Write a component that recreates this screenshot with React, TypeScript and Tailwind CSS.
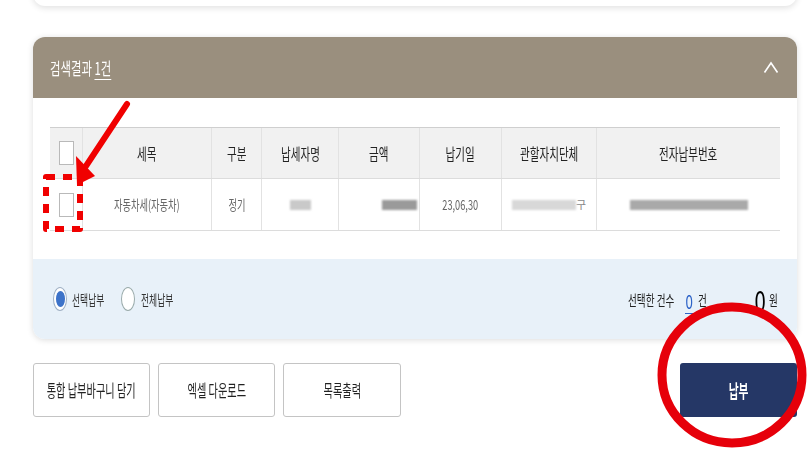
import React from "react";

const font = { fontFamily: '"Noto Sans CJK KR", "Noto Sans", sans-serif' };

function Cell({ children, className = "" }: { children?: React.ReactNode; className?: string }) {
  return (
    <div className={"flex items-center justify-center border-r border-[#e2e2e2] " + className}>{children}</div>
  );
}

function N({ children, className = "" }: { children: React.ReactNode; className?: string }) {
  return <span className={"inline-block scale-x-[0.66] whitespace-nowrap " + className}>{children}</span>;
}

function B({ children, className = "" }: { children: React.ReactNode; className?: string }) {
  return <span className={"inline-block scale-x-[0.6] whitespace-nowrap " + className}>{children}</span>;
}

function Blur({ w, c, className = "" }: { w: number; c: string; className?: string }) {
  return <span className={"inline-block h-[10px] blur-[1.2px] " + className} style={{ width: w, background: c }} />;
}

function Box() {
  return <div className="h-[24px] w-[15px] border border-[#b9b9b9] bg-white" />;
}

export default function App() {
  const cols = "grid grid-cols-[33px_129px_50px_77px_81px_82px_95px_183px]";
  return (
    <div className="relative h-[450px] w-[810px] overflow-hidden bg-white" style={font}>
      <div className="ml-[33px] mr-[13px] -mt-[20px] h-[26px] rounded-b-[12px] bg-white shadow-[0_2px_6px_rgba(0,0,0,0.12)]" />

      <div className="ml-[33px] mr-[13px] mt-[31px] rounded-[12px] bg-white shadow-[0_1px_6px_rgba(0,0,0,0.14)]">
        <div className="flex h-[61px] items-center justify-between rounded-t-[12px] bg-[#9a8f7e] pl-[17px] pr-[18px]">
          <div className="flex items-center text-[17px] text-white">
            <span className="inline-block origin-left scale-x-[0.67] whitespace-nowrap">
              검색결과 <span className="underline underline-offset-4">1건</span>
            </span>
          </div>
          <svg width="16" height="13" viewBox="0 0 16 13">
            <path d="M1.5 11.5 L8 2 L14.5 11.5" fill="none" stroke="white" strokeWidth="1.6" />
          </svg>
        </div>

        <div className="px-[17px] pt-[29px]">
          <div className="border-t border-[#cfcfcf]">
            <div className={cols + " h-[51px] border-b border-[#dcdcdc] bg-[#f1f1f1] text-[16px] text-[#222]"}>
              <Cell><Box /></Cell>
              <Cell><N>세목</N></Cell>
              <Cell><N>구분</N></Cell>
              <Cell><N>납세자명</N></Cell>
              <Cell><N>금액</N></Cell>
              <Cell><N>납기일</N></Cell>
              <Cell><N>관할자치단체</N></Cell>
              <Cell className="border-r-0"><N>전자납부번호</N></Cell>
            </div>
            <div className={cols + " h-[52px] border-b border-[#dcdcdc] text-[14px] text-[#666]"}>
              <Cell><Box /></Cell>
              <Cell><N>자동차세(자동차)</N></Cell>
              <Cell><N>정기</N></Cell>
              <Cell><Blur w={21} c="#c9c9c9" /></Cell>
              <Cell className="justify-end pr-[2px]"><Blur w={35} c="#9a9a9a" /></Cell>
              <Cell><N>23,06,30</N></Cell>
              <Cell><Blur w={64} c="#d8d8d8" /><span className="text-[11px] text-[#888]">구</span></Cell>
              <Cell className="border-r-0"><Blur w={118} c="#a9a9a9" className="h-[8px]" /></Cell>
            </div>
          </div>
        </div>

        <div className="mt-[28px] flex h-[80px] items-center justify-between rounded-b-[12px] bg-[#e8f1f9] pl-[20px] pr-[19px]">
          <div className="flex items-center text-[14px] text-[#333]">
            <span className="flex h-[24px] w-[14px] items-center justify-center rounded-[50%] border border-[#9fb0c4] bg-white">
              <span className="h-[16px] w-[9px] rounded-[50%] bg-[#3d73c9]" />
            </span>
            <span className="ml-[5px] inline-block w-[42px]"><span className="inline-block origin-left scale-x-[0.63] whitespace-nowrap">선택납부</span></span>
            <span className="ml-[7px] h-[24px] w-[14px] rounded-[50%] border border-[#9aa] bg-white" />
            <span className="ml-[6px] inline-block origin-left scale-x-[0.63] whitespace-nowrap">전체납부</span>
          </div>
          <div className="flex items-end text-[#222]">
            <span className="mb-[4px] inline-block w-[50px] text-[15px]"><span className="inline-block origin-left scale-x-[0.64] whitespace-nowrap">선택한 건수</span></span>
            <span className="ml-[7px] mb-[1px] flex w-[9px] justify-center border-b border-[#2d63c8] text-[19px] leading-[24px] text-[#2d63c8]"><span className="inline-block scale-x-[0.7]">0</span></span>
            <span className="ml-[4px] mb-[4px] inline-block w-[10px] text-[15px]"><span className="inline-block origin-left scale-x-[0.64]">건</span></span>
            <span className="ml-[45px] flex w-[14px] justify-center text-[29px] leading-[32px] text-black"><span className="inline-block scale-x-[0.7]">0</span></span>
            <span className="ml-[2px] mb-[4px] inline-block w-[9px] text-[15px]"><span className="inline-block origin-left scale-x-[0.64]">원</span></span>
          </div>
        </div>
      </div>

      <div className="ml-[33px] mr-[13px] mt-[24px] flex items-center text-[17px] text-[#222]">
        <button className="flex h-[54px] w-[117px] items-center justify-center rounded-[3px] border border-[#c4c4c4] bg-white"><B>통합 납부바구니 담기</B></button>
        <button className="ml-[8px] flex h-[54px] w-[117px] items-center justify-center rounded-[3px] border border-[#c4c4c4] bg-white"><B>엑셀 다운로드</B></button>
        <button className="ml-[8px] flex h-[54px] w-[118px] items-center justify-center rounded-[3px] border border-[#c4c4c4] bg-white"><B>목록출력</B></button>
        <button className="ml-auto flex h-[54px] w-[117px] items-center justify-center rounded-[3px] bg-[#253766] text-[18px] font-bold text-white"><B>납부</B></button>
      </div>

      <svg className="pointer-events-none absolute left-0 top-0" width="810" height="450" viewBox="0 0 810 450">
        <line x1="127" y1="104" x2="86" y2="166" stroke="#f00000" strokeWidth="6" strokeLinecap="round" />
        <polygon points="76,156 77,185 95,176" fill="#f00000" />
        <rect x="46" y="177" width="34" height="52" fill="none" stroke="#f00000" strokeWidth="6" strokeDasharray="9 8" strokeLinejoin="round" />
        <ellipse cx="732" cy="375" rx="70" ry="68" fill="none" stroke="#e6000a" strokeWidth="9" />
      </svg>
    </div>
  );
}
